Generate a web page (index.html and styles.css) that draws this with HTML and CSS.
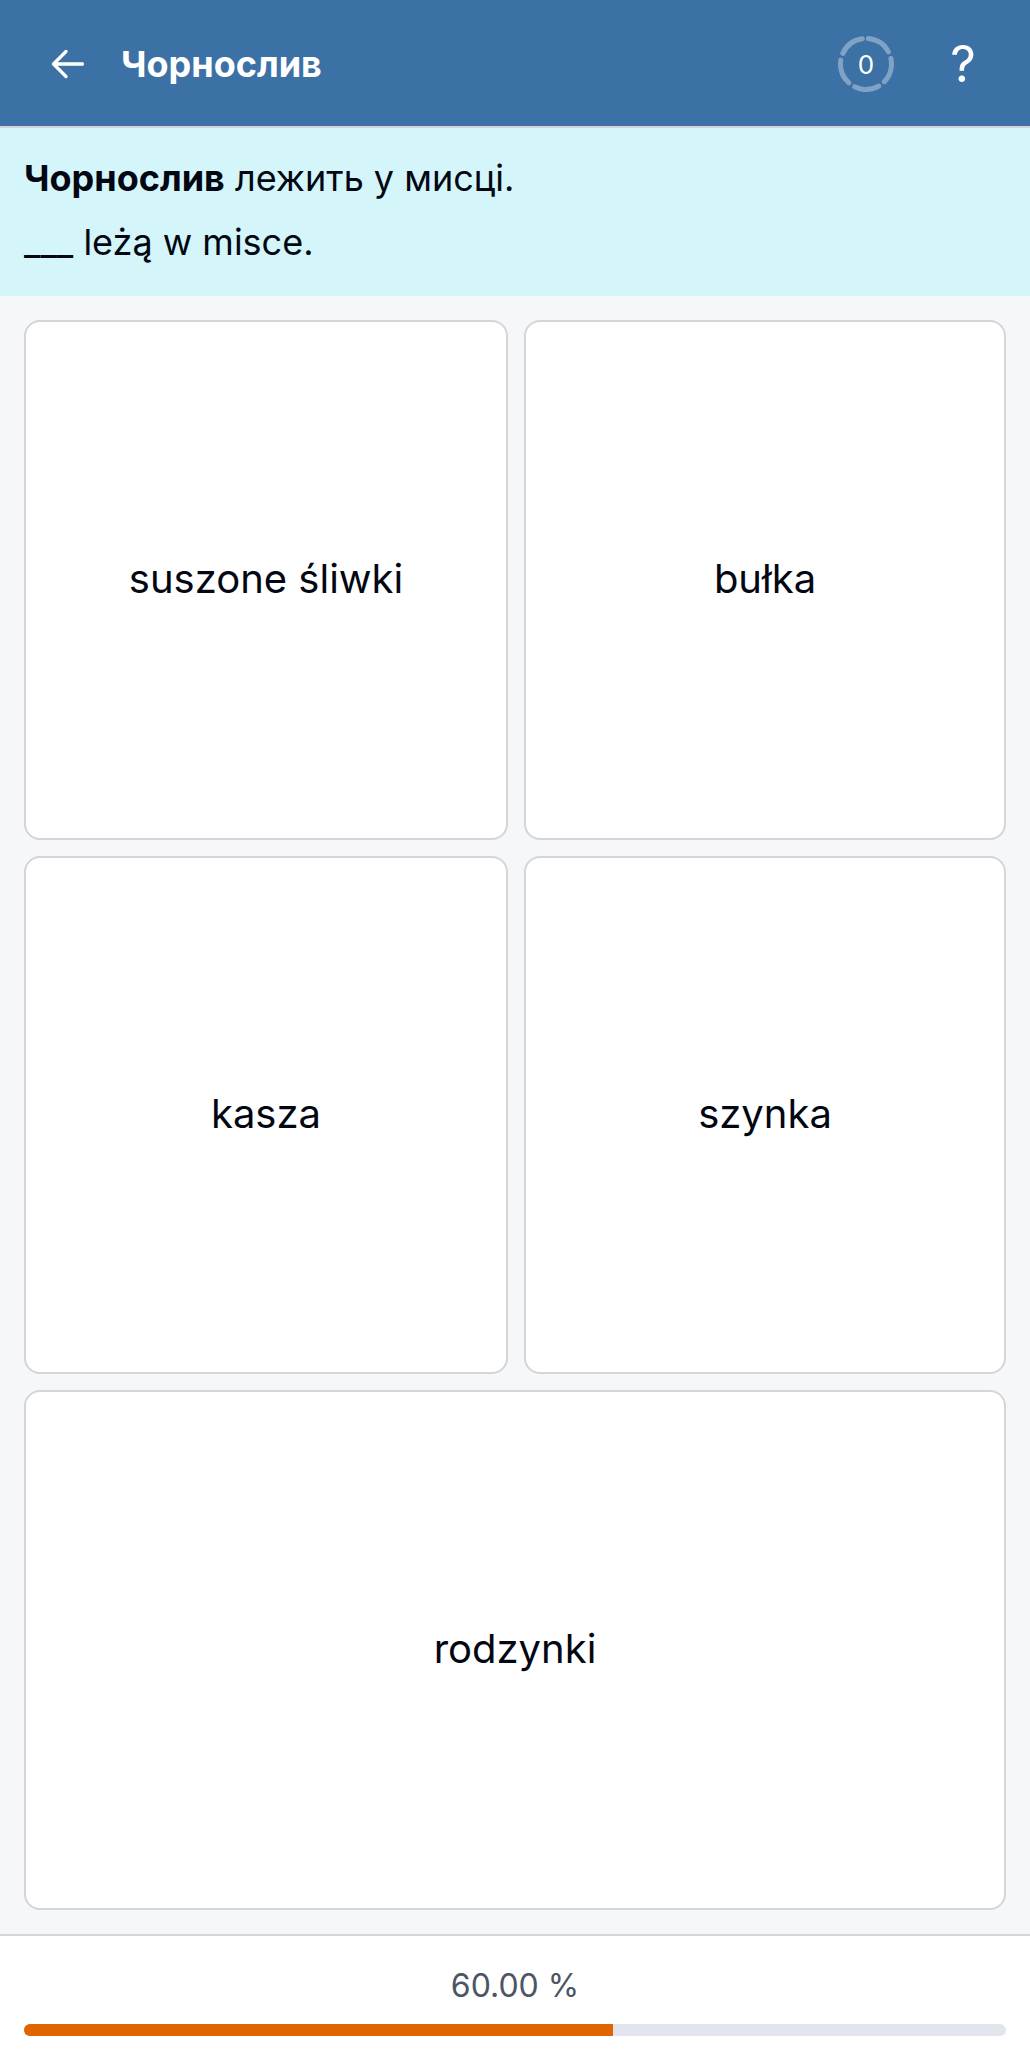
FILE: index.html
```html
<!DOCTYPE html>
<html lang="uk">
<head>
<meta charset="utf-8">
<title>Чорнослив</title>
<link rel="stylesheet" href="styles.css">
</head>
<body>
<div class="app">
  <header class="topbar">
    <button class="back" aria-label="Back">
      <svg width="36" height="36" viewBox="0 0 36 36" fill="none" stroke="#fff" stroke-width="3.300" stroke-linecap="round" stroke-linejoin="round"><path d="M32.500 18H3.500M16 5.500 3.500 18 16 30.500"/></svg>
    </button>
    <h1 class="title">Чорнослив</h1>
    <div class="score">
      <svg class="ring" width="58" height="58" viewBox="0 0 58 58" fill="none" stroke="#fff" stroke-opacity=".35" stroke-width="5" stroke-linecap="round"><circle cx="29" cy="29" r="25.500" stroke-dasharray="25 7.040" transform="rotate(-85 29 29)"/></svg>
      <span class="score-num">0</span>
    </div>
    <span class="help">?</span>
  </header>
  <section class="prompt">
    <p class="line"><strong>Чорнослив</strong> лежить у мисці.</p>
    <p class="line">___ leżą w misce.</p>
  </section>
  <main class="choices">
    <button class="card">suszone śliwki</button>
    <button class="card">bułka</button>
    <button class="card">kasza</button>
    <button class="card">szynka</button>
    <button class="card wide">rodzynki</button>
  </main>
  <footer class="footer">
    <div class="percent">60.00 %</div>
    <div class="track"><div class="fill" style="width:60%"></div></div>
  </footer>
</div>
</body>
</html>
```
FILE: styles.css
```css
* { box-sizing: border-box; }
html, body { margin: 0; padding: 0; }
body { font-family: Inter, "Liberation Sans", sans-serif; color: #030712; background: #f6f7f9; }
.app { width: 1030px; height: 2060px; display: flex; flex-direction: column; }
.topbar { height: 128px; flex: none; background: #3c71a6; border-bottom: 2px solid #d1d5db; display: flex; align-items: center; padding: 2px 53px 0 50px; color: #fff; }
.back { background: none; border: 0; padding: 0; width: 36px; height: 36px; display: flex; }
.title { margin: 0 0 0 35px; font-size: 36px; line-height: 44px; font-weight: 700; flex: 1; }
.score { position: relative; width: 58px; height: 58px; margin-right: 54px; }
.ring { display: block; }
.score-num { position: absolute; inset: 0; display: flex; align-items: center; justify-content: center; font-size: 26px; }
.help { width: 28px; font-size: 50px; line-height: 58px; text-align: center; font-weight: 400; }
.prompt { height: 168px; flex: none; background: #d4f5fa; padding: 18px 24px 0; }
.line { margin: 0; font-size: 36px; line-height: 64px; }
.line strong { font-weight: 700; }
.choices { flex: 1; display: grid; grid-template-columns: 484px 1fr; grid-template-rows: 520px 518px 1fr; gap: 16px; padding: 24px 24px 24px; }
.card { background: #fff; border: 2px solid #d4d5d9; border-radius: 16px; font: inherit; font-size: 40px; color: #030712; padding: 0 0 4px; }
.wide { grid-column: 1 / 3; }
.footer { height: 126px; flex: none; background: #fff; border-top: 2px solid #d4d5d9; padding: 28px 24px 0; }
.percent { font-size: 32px; line-height: 44px; text-align: center; color: #4b5563; margin-bottom: 16px; }
.track { height: 12px; border-radius: 6px; background: #e2e5ee; overflow: hidden; }
.fill { height: 100%; background: #e06500; }
```
